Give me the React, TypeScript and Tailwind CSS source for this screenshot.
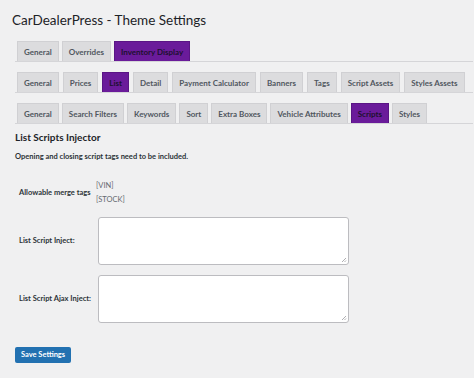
import React from "react";

type Tab = { label: string; active?: boolean };

const rows: { gap: string; tabs: Tab[] }[] = [
  {
    gap: "gap-[3px]",
    tabs: [{ label: "General" }, { label: "Overrides" }, { label: "Inventory Display", active: true }],
  },
  {
    gap: "gap-[4px]",
    tabs: [
      { label: "General" },
      { label: "Prices" },
      { label: "List", active: true },
      { label: "Detail" },
      { label: "Payment Calculator" },
      { label: "Banners" },
      { label: "Tags" },
      { label: "Script Assets" },
      { label: "Styles Assets" },
    ],
  },
  {
    gap: "gap-[3px]",
    tabs: [
      { label: "General" },
      { label: "Search Filters" },
      { label: "Keywords" },
      { label: "Sort" },
      { label: "Extra Boxes" },
      { label: "Vehicle Attributes" },
      { label: "Scripts", active: true },
      { label: "Styles" },
    ],
  },
];

function TabRow({ tabs, gap }: { tabs: Tab[]; gap: string }) {
  return (
    <div className={"flex items-end border-b border-[#d5d5d8] pl-[2px] mr-[1px] " + gap}>
      {tabs.map((t) => (
        <div
          key={t.label}
          className={
            t.active
              ? "h-[20px] px-[6px] flex items-center whitespace-nowrap text-[8px] font-bold bg-[#6a1b9a] border border-[#5a1585] border-b-0 text-[#1d1030]"
              : "h-[20px] px-[6px] flex items-center whitespace-nowrap text-[8px] font-bold bg-[#dcdcde] border border-[#d0d0d3] border-b-0 text-[#50575e]"
          }
        >
          {t.label}
        </div>
      ))}
    </div>
  );
}

function Grip() {
  return (
    <svg className="absolute right-[1px] bottom-[1px]" width="6" height="6" viewBox="0 0 6 6">
      <path d="M5 1 L1 5 M5 3.5 L3.5 5" stroke="#9a9a9e" strokeWidth="0.8" />
    </svg>
  );
}

export default function App() {
  return (
    <div
      className="w-[474px] h-[378px] bg-[#f0f0f1] text-[#1d2327] overflow-hidden"
      style={{ fontFamily: 'Lato, "Noto Sans", sans-serif' }}
    >
      <h1 className="pl-[12px] pt-[10px] text-[13.5px] leading-[20px] text-[#1d2327]">
        CarDealerPress - Theme Settings
      </h1>

      <div className="pl-[15px] mt-[11px] flex flex-col gap-[10px]">
        {rows.map((r, i) => (
          <TabRow key={i} tabs={r.tabs} gap={r.gap} />
        ))}
      </div>

      <div className="pl-[15px] pr-[12px]">
        <h2 className="mt-[6px] text-[10px] font-bold leading-[14px]">List Scripts Injector</h2>
        <p className="mt-[8px] text-[7.5px] font-bold leading-[10px] text-[#2c3338]">
          Opening and closing script tags need to be included.
        </p>

        <div className="mt-[17px] flex items-center">
          <div className="w-[81px] pl-[4px] whitespace-nowrap text-[7.5px] font-bold text-[#2c3338]">
            Allowable merge tags
          </div>
          <div className="text-[7.5px] leading-[14px] text-[#646970]">
            <div>[VIN]</div>
            <div>[STOCK]</div>
          </div>
        </div>

        <div className="mt-[10px] flex items-center">
          <div className="w-[83px] pl-[4px] whitespace-nowrap text-[7.5px] font-bold text-[#2c3338]">
            List Script Inject:
          </div>
          <div className="relative w-[251px] h-[48px] bg-white border border-[#bcbcc0] rounded-[3px]">
            <Grip />
          </div>
        </div>

        <div className="mt-[10px] flex items-center">
          <div className="w-[83px] pl-[4px] whitespace-nowrap text-[7.5px] font-bold text-[#2c3338]">
            List Script Ajax Inject:
          </div>
          <div className="relative w-[251px] h-[48px] bg-white border border-[#bcbcc0] rounded-[3px]">
            <Grip />
          </div>
        </div>

        <button className="mt-[24px] h-[16px] w-[56px] rounded-[2px] bg-[#2271b1] text-white text-[7.5px] font-bold leading-none">
          Save Settings
        </button>
      </div>
    </div>
  );
}
